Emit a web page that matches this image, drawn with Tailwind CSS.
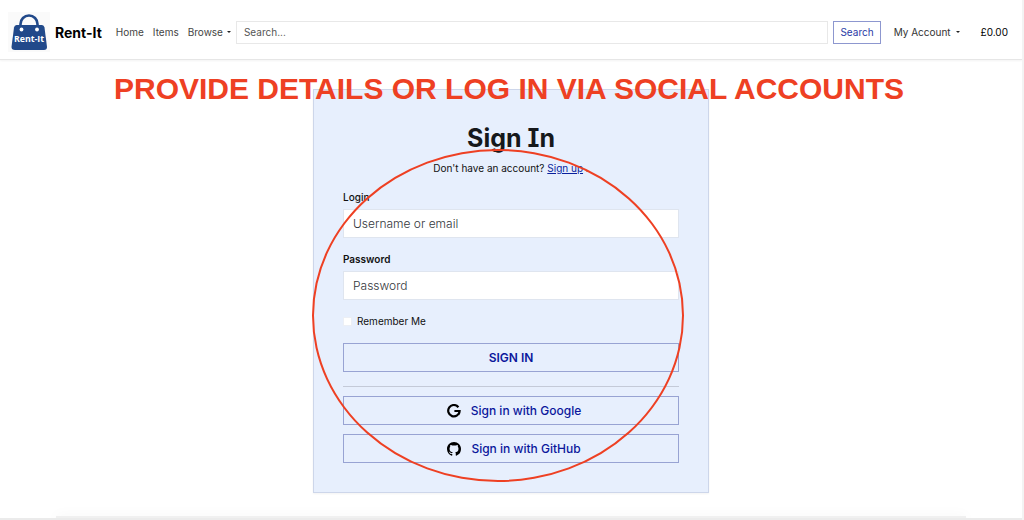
<!DOCTYPE html>
<html lang="en">
<head>
<meta charset="utf-8">
<meta name="viewport" content="width=device-width, initial-scale=1">
<title>Rent-It - Sign In</title>
<script src="https://cdn.jsdelivr.net/npm/@tailwindcss/browser@4"></script>
</head>
<body class="flex min-h-screen flex-col overflow-x-hidden border-r-2 border-[#f3f3f3] bg-white font-['Inter',sans-serif] text-[10px] text-[#111]">
<header class="flex h-[60px] items-center border-b border-[#e6e6e6] pt-[5px] pr-[14px] pl-2 shadow-xs">
  <a href="#" class="flex items-center gap-1 text-[14px] font-bold text-black">
    <svg class="h-[40px] w-[43px]" viewBox="0 0 43 40" aria-hidden="true">
      <path fill="#fafafa" d="M0 0h42v40H0z"/>
      <path d="M12.500 14v-2a8.500 8.500 0 0 1 17 0v2" fill="none" stroke="#21498a" stroke-width="2.600"/>
      <path fill="#21498a" d="M8.500 13H34q2 0 2.500 2.500L39 35q0 3-3 3H7q-3.500 0-3.500-3L6 15.500Q6.500 13 8.500 13Z"/>
      <circle cx="13.500" cy="17.500" r="1.900" fill="#fff"/><circle cx="29" cy="17.500" r="1.900" fill="#fff"/>
      <text x="21" y="29.500" text-anchor="middle" font-family="Open Sans, sans-serif" font-size="8.800" font-weight="700" fill="#fff">Rent-It</text>
    </svg>
    Rent-It
  </a>
  <nav class="ml-[14px] flex items-center gap-[9px] text-[#444]">
    <a href="#">Home</a>
    <a href="#">Items</a>
    <a href="#" class="flex items-center gap-[4px]">Browse <span class="border-x-2 border-t-2 border-x-transparent border-t-[#222]"></span></a>
  </nav>
  <form class="ml-[5px] flex flex-1 gap-[5px]">
    <input type="search" aria-label="Search" placeholder="Search..." class="h-[23px] min-w-0 flex-1 border border-[#e8e8e8] px-[7px] placeholder:text-[#555]">
    <button type="button" class="h-[23px] border border-[#8d97cf] px-[6px] text-[#2a3aa6]">Search</button>
  </form>
  <a href="#" class="ml-[13px] flex items-center gap-[5px] text-[#333]">My Account <span class="border-x-2 border-t-2 border-x-transparent border-t-[#222]"></span></a>
  <a href="#" class="ml-[21px] text-black">£0.00</a>
</header>
<main class="flex flex-1 flex-col items-center px-4 pt-[29px]">
  <section class="relative w-full max-w-[396px] border border-[#cdd6ea] bg-[#e7effd] px-[29px] pt-7 pb-[29px] shadow-xs">
    <h1 class="text-center text-[25px] leading-10 font-bold text-[#16181b] [font-feature-settings:'cv08']">Sign In</h1>
    <p class="text-center leading-5">Don't have an account? <a href="#" class="text-[#0a1f9c] underline">Sign up</a> .</p>
    <form class="mt-[9px] flex flex-col">
      <label for="login" class="leading-5 font-medium">Login</label>
      <input id="login" type="text" placeholder="Username or email" class="mt-[2px] h-[29px] border border-[#dfe5ef] bg-white px-[9px] text-[12px] font-light placeholder:text-[#33373c]">
      <label for="password" class="mt-[11px] leading-5 font-semibold">Password</label>
      <input id="password" type="password" placeholder="Password" class="mt-[2px] h-[29px] border border-[#dfe5ef] bg-white px-[9px] text-[12px] font-light placeholder:text-[#33373c]">
      <label class="mt-[11px] flex items-center gap-[5px] leading-5"><input type="checkbox" class="size-[9px] appearance-none border border-[#eceff5] bg-white checked:bg-[#0a1f9c]">Remember Me</label>
      <button type="button" class="mt-3 h-[29px] border border-[#98a3d3] text-[12px] font-semibold text-[#0b179c]">SIGN IN</button>
      <hr class="mt-[14px] border-[#c4cad8]">
      <button type="button" class="mt-[9px] flex h-[29px] items-center justify-center gap-[10px] border border-[#98a3d3] pl-[6px] text-[12px] font-medium text-[#0b179c]">
        <svg class="size-[14px] text-black" viewBox="0 0 14 14" fill="none" stroke="currentColor" stroke-width="2.200" aria-hidden="true"><path d="M11.400 3.200A5.700 5.700 0 1 0 12.600 7H7.400M12.600 7q0 2-1.200 3.600"/></svg>
        Sign in with Google
      </button>
      <button type="button" class="mt-[9px] flex h-[29px] items-center justify-center gap-[10px] border border-[#98a3d3] pl-[6px] text-[12px] font-medium text-[#0b179c]">
        <svg class="size-[14px] text-black" viewBox="0 0 16 16" fill="currentColor" aria-hidden="true"><path d="M8 0C3.580 0 0 3.580 0 8c0 3.540 2.290 6.530 5.470 7.590.4.070.55-.17.55-.38 0-.19-.01-.82-.01-1.490-2.010.37-2.530-.49-2.690-.94-.09-.23-.48-.94-.82-1.130-.28-.15-.68-.52-.01-.53.63-.01 1.080.58 1.230.82.72 1.210 1.870.87 2.330.66.07-.52.28-.87.51-1.070-1.780-.2-3.640-.89-3.640-3.950 0-.87.31-1.590.82-2.150-.08-.2-.36-1.020.08-2.120 0 0 .67-.21 2.200.82.64-.18 1.320-.27 2-.27s1.360.09 2 .27c1.530-1.040 2.200-.82 2.200-.82.44 1.100.16 1.920.08 2.120.51.56.82 1.270.82 2.150 0 3.070-1.870 3.750-3.650 3.950.29.25.54.73.54 1.480 0 1.070-.01 1.930-.01 2.200 0 .21.15.46.55.38A8.010 8.010 0 0 0 16 8c0-4.420-3.580-8-8-8Z"/></svg>
        Sign in with GitHub
      </button>
    </form>
    <p class="pointer-events-none absolute inset-x-0 -top-[19px] flex justify-center pr-1 font-['Liberation_Sans',sans-serif] text-[30px] leading-9 font-bold whitespace-nowrap text-[#ee4023]">PROVIDE DETAILS OR LOG IN VIA SOCIAL ACCOUNTS</p>
    <div class="pointer-events-none absolute top-[59px] -left-[2px] h-[333px] w-[372px] rounded-[50%] border-2 border-[#ee4023]"></div>
  </section>
</main>
<footer class="overflow-hidden px-14 pt-4"><div class="h-[2px] bg-[#f0f0f0] shadow-[0_2px_14px_0_#dddddd]"></div></footer>
<div class="h-[2px] bg-[#ebebeb]"></div>
</body>
</html>
